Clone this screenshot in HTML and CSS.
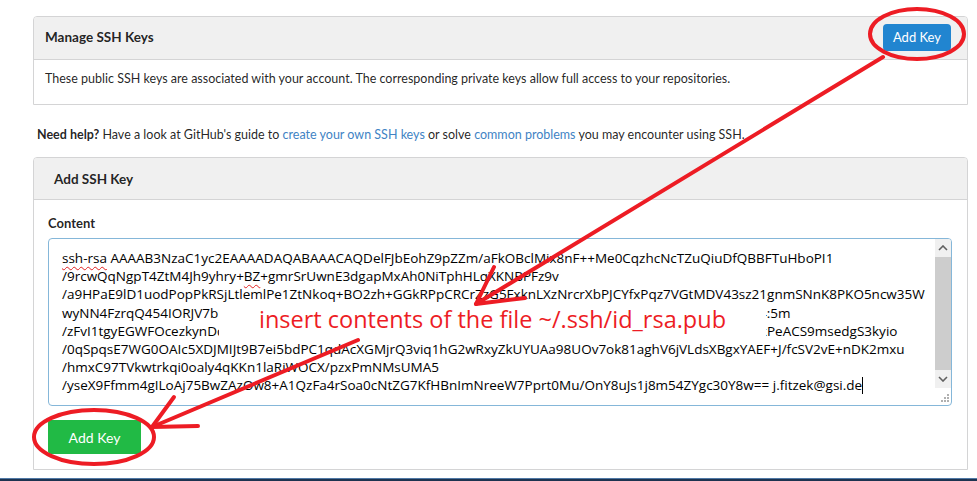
FILE: index.html
```html
<!DOCTYPE html>
<html lang="en">
<head>
<meta charset="utf-8">
<title>SSH Keys</title>
<link rel="stylesheet" href="styles.css">
</head>
<body>
<div class="page">
  <section class="panel manage">
    <div class="panel-head">
      <h4 class="panel-title">Manage SSH Keys</h4>
      <button class="btn btn-blue" type="button">Add Key</button>
    </div>
    <div class="panel-body">
      <p class="desc">These public SSH keys are associated with your account. The corresponding private keys allow full access to your repositories.</p>
    </div>
  </section>

  <p class="help"><strong>Need help?</strong> Have a look at GitHub's guide to <a href="#">create your own SSH keys</a> or solve <a href="#">common problems</a> you may encounter using SSH.</p>

  <section class="panel add">
    <div class="panel-head">
      <h4 class="panel-title">Add SSH Key</h4>
    </div>
    <div class="panel-body">
      <label class="field-label">Content</label>
      <div class="textarea">
        <div class="ta-text">
          <div class="ta-line"><span class="spell">ssh-rsa</span> AAAAB3NzaC1yc2EAAAADAQABAAACAQDelFJbEohZ9pZZm/aFkOBclMix8nF++Me0CqzhcNcTZuQiuDfQBBFTuHboPI1</div>
          <div class="ta-line">/9rcwQqNgpT4ZtM4Jh9yhry+<span class="spell">BZ</span>+gmrSrUwnE3dgapMxAh0NiTphHLqXKNBPFz9v</div>
          <div class="ta-line">/a9HPaE9lD1uodPopPkRSjLtlemlPe1ZtNkoq+BO2zh+GGkRPpCRCrZzG5FxknLXzNrcrXbPJCYfxPqz7VGtMDV43sz21gnmSNnK8PKO5ncw35W</div>
          <div class="ta-line">wyNN4FzrqQ454IORJV7bK2dQ8vYpTn0xHwLs3aRfG7jU1cZo9eMiBkq5WtNdVy2PhXgAuRz8pLq3WnT6vYb0KcMs4:5m</div>
          <div class="ta-line">/zFvI1tgyEGWFOcezkynDq8LmTx2RsKv0aHe3YdWf7NjPu5iGb1oZc9QkMlVt4xSr2wUNf5TgQ1xWe8jKa2LpVr7ZcXkPeACS9msedgS3kyio</div>
          <div class="ta-line">/0qSpqsE7WG0OAIc5XDJMIJt9B7ei5bdPC1qdAcXGMjrQ3viq1hG2wRxyZkUYUAa98UOv7ok81aghV6jVLdsXBgxYAEF+J/fcSV2vE+nDK2mxu</div>
          <div class="ta-line">/hmxC97TVkwtrkqi0oaly4qKKn1laRiWOCX/pzxPmNMsUMA5</div>
          <div class="ta-line">/yseX9Ffmm4gILoAj75BwZAzOw8+A1QzFa4rSoa0cNtZG7KfHBnImNreeW7Pprt0Mu/OnY8uJs1j8m54ZYgc30Y8w== j.fitzek@gsi.de<span class="caret"></span></div>
        </div>
        <div class="ta-side">
          <div class="sb">
            <div class="sb-arrow">
              <svg width="10" height="6" viewBox="0 0 10 6"><polyline points="1,5 5,1 9,5" fill="none" stroke="#606060" stroke-width="1.6"/></svg>
            </div>
            <div class="sb-thumb"></div>
            <div class="sb-arrow">
              <svg width="10" height="6" viewBox="0 0 10 6"><polyline points="1,1 5,5 9,1" fill="none" stroke="#606060" stroke-width="1.6"/></svg>
            </div>
          </div>
          <div class="grip">
            <svg width="8" height="8" viewBox="0 0 8 8" fill="#b0b0b0">
              <rect x="6" y="0" width="2" height="2"/>
              <rect x="3" y="3" width="2" height="2"/><rect x="6" y="3" width="2" height="2"/>
              <rect x="0" y="6" width="2" height="2"/><rect x="3" y="6" width="2" height="2"/><rect x="6" y="6" width="2" height="2"/>
            </svg>
          </div>
        </div>
      </div>
      <button class="btn btn-green" type="button">Add Key</button>
    </div>
  </section>
</div>
<div class="taskbar"></div>

<div class="note">insert contents of the file ~/.ssh/id_rsa.pub</div>

<svg class="marks" width="977" height="481" viewBox="0 0 977 481">
  <g fill="none" stroke="#ed1c24" stroke-width="4" stroke-linecap="round" stroke-linejoin="round">
    <ellipse cx="917" cy="34" rx="47" ry="25"/>
    <line x1="883" y1="57" x2="476" y2="304"/>
    <polyline points="494,267 476,304 525,298"/>
    <ellipse cx="94" cy="437" rx="60" ry="27"/>
    <line x1="358" y1="340" x2="152" y2="427"/>
    <polyline points="174,397 152,427 198,426"/>
  </g>
</svg>
</body>
</html>
```

FILE: styles.css
```css
* { box-sizing: border-box; }

html, body {
  margin: 0;
  padding: 0;
  background: #ffffff;
}

body {
  position: relative;
  width: 977px;
  height: 481px;
  overflow: hidden;
  font-family: Lato, "Helvetica Neue", Arial, sans-serif;
  font-size: 12.5px;
  color: rgba(0, 0, 0, 0.87);
}

.page {
  padding: 16px 0 0 33px;
  width: 968px;
}

.panel {
  border: 1px solid #d4d4d5;
  border-radius: 4px 4px 0 0;
  background: #fff;
}

.panel-head {
  display: flex;
  align-items: center;
  justify-content: space-between;
  background: #f0f0f0;
  border-bottom: 1px solid #d4d4d5;
  border-radius: 3px 3px 0 0;
}

.panel-title {
  margin: 0;
  font-size: 13.5px;
  font-weight: 700;
  line-height: 18px;
}

.manage .panel-head {
  height: 43px;
  padding: 0 16px 2px 11px;
}

.manage .panel-body {
  height: 44px;
  padding: 10px 11px 0 11px;
}

.desc {
  margin: 0;
  line-height: 18px;
}

.btn {
  border: none;
  color: #fff;
  font-family: Lato, "Helvetica Neue", Arial, sans-serif;
  cursor: pointer;
  border-radius: 4px;
}

.btn-blue {
  height: 27px;
  padding: 0 10px;
  background: #2185d0;
  font-size: 13px;
}

.help {
  margin: 21px 0 13px 4px;
  line-height: 18px;
}

.help strong { font-weight: 700; }

.help a {
  color: #4183c4;
  text-decoration: none;
}

.add .panel-head {
  height: 42px;
  padding: 0 20px;
}

.add .panel-body {
  padding: 14px 15px 15px 14px;
}

.field-label {
  display: block;
  font-size: 13px;
  font-weight: 700;
  line-height: 18px;
  margin-bottom: 6px;
}

.textarea {
  display: flex;
  height: 168px;
  border: 1px solid #85b7d9;
  border-radius: 4px;
  background: #fff;
}

.ta-text {
  flex: 1;
  padding: 10px 0 0 13px;
  overflow: hidden;
  font-family: "Open Sans", "Noto Sans", sans-serif;
  font-size: 13.5px;
  line-height: 18.2px;
  color: #000;
}

.ta-line {
  white-space: nowrap;
}

.spell {
  text-decoration: underline wavy #e02020;
  text-decoration-skip-ink: none;
  text-underline-offset: 3px;
  text-decoration-thickness: 1px;
}

.caret {
  display: inline-block;
  width: 1px;
  height: 17px;
  background: #000;
  vertical-align: -4px;
}

.ta-side {
  width: 16px;
  display: flex;
  flex-direction: column;
}

.sb {
  display: flex;
  flex-direction: column;
  height: 149px;
  background: #f0f0f0;
  border-top-right-radius: 3px;
}

.sb-arrow {
  height: 18px;
  display: flex;
  align-items: center;
  justify-content: center;
}

.sb-thumb {
  height: 113px;
  background: #cdcdcd;
}

.grip {
  flex: 1;
  display: flex;
  align-items: flex-end;
  justify-content: flex-end;
  padding: 0 2px 3px 0;
}

.btn-green {
  display: block;
  margin-top: 14px;
  width: 93px;
  height: 34px;
  background: #21ba45;
  font-size: 14px;
  border-radius: 3px;
}

.taskbar {
  position: absolute;
  left: 0;
  right: 0;
  bottom: 0;
  height: 3px;
  background: #1d3350;
  border-top: 1px solid #4f79a6;
}

/* annotation layer drawn over the screenshot */
.note {
  position: absolute;
  left: 219px;
  top: 304px;
  width: 547px;
  height: 37px;
  background: #fff;
  color: #ed1c24;
  font-family: "Open Sans", "Noto Sans", sans-serif;
  font-size: 23.5px;
  line-height: 30px;
  text-align: center;
  white-space: nowrap;
}

.marks {
  position: absolute;
  left: 0;
  top: 0;
  pointer-events: none;
}
```
